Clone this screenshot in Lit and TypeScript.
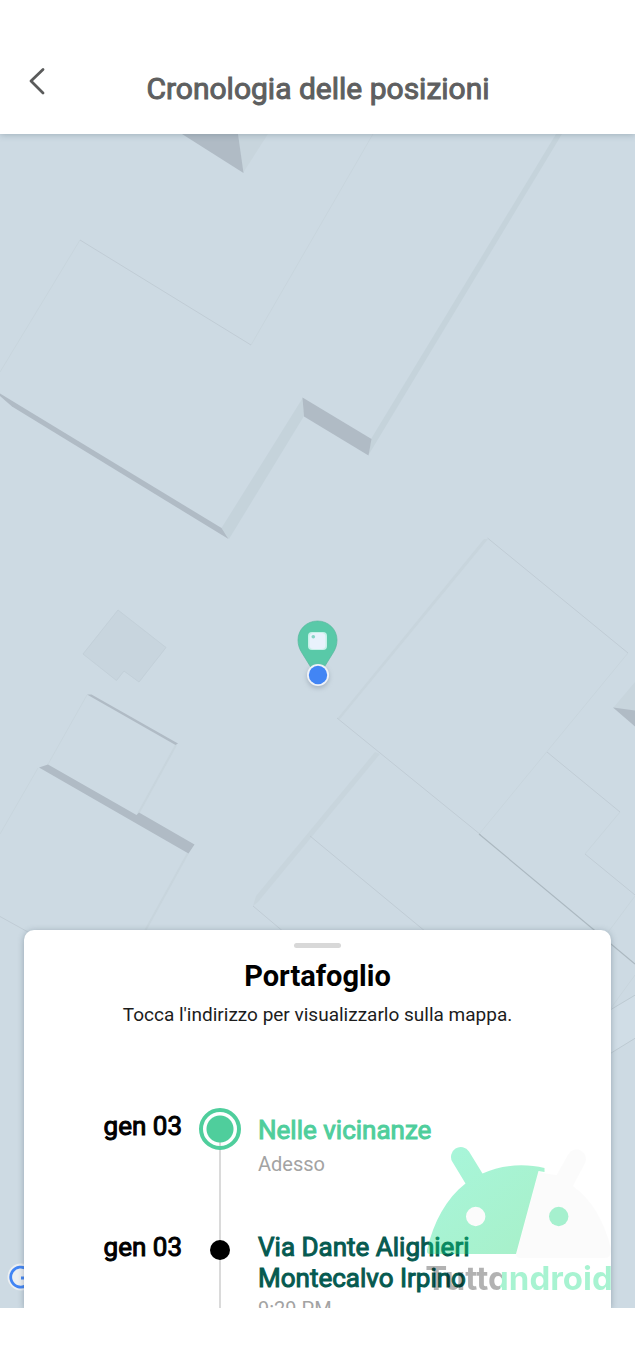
import { LitElement, html, svg, css } from "lit";
import { customElement } from "lit/decorators.js";
import { classMap } from "lit/directives/class-map.js";

interface Stop {
  date: string;
  address: string[];
  time: string;
  current: boolean;
}

const STOPS: Stop[] = [
  { date: "gen 03", address: ["Nelle vicinanze"], time: "Adesso", current: true },
  { date: "gen 03", address: ["Via Dante Alighieri", "Montecalvo Irpino"], time: "9:29 PM", current: false },
];

@customElement("position-map")
class PositionMap extends LitElement {
  static styles = css`
    :host { display: block; overflow: hidden; }
    .map { display: block; width: 100%; height: 100%; background: #cddae3; }
    .wall { fill: #b0bbc5; }
    .side { fill: #c5d3db; }
    .pale { fill: #c8d5dd; }
    .hut { fill: #c8d5de; stroke: #c3d0d9; }
    .edge { fill: none; stroke: #c0ccd5; stroke-width: 1; }
    .faint { fill: none; stroke: #c8d5dd; stroke-width: 1; }
    .wide { stroke-width: 2; }
    .deep { fill: none; stroke: #abb8c0; stroke-width: 1.2; }
    .road { fill: #d0dde6; stroke: #bdcad2; }
  `;

  render() {
    return html`
      <svg class="map" viewBox="0 134 635 1174" preserveAspectRatio="xMidYMin slice" role="img" aria-label="Mappa">
        <defs>
          <filter id="soft" x="-50%" y="-50%" width="200%" height="200%"><feGaussianBlur stdDeviation="2" /></filter>
          <filter id="glow" x="-50%" y="-50%" width="200%" height="200%"><feGaussianBlur stdDeviation="0.7" /></filter>
        </defs>
        ${svg`
          <path class="pale" d="M238 134H268L243 173Z" />
          <path class="wall" d="M182 134H238L243.500 173Z" />
          <path class="faint" d="M373 134L251 345M80 240L0 372" />
          <path class="edge" d="M80 240L251 345" />
          <path class="side" d="M556 134H562L368.500 455L371 439Z" />
          <path class="side" d="M303 397.500L304 416L229 539L221.500 528Z" />
          <path class="wall" d="M0 393.500L221.500 528L228.500 539L12 406.500L0 396Z" />
          <path class="wall" d="M302.500 397.500L371.500 439L368.500 455.500L304 416.500Z" />
          <path class="hut" d="M118 610L166 647.500L139 682L124 671L116.500 680.500L83 654Z" />
          <path class="faint" d="M87 695L47 766M38 768L0 834" />
          <path class="faint wide" d="M176 745L138 814M188 853L145 931" />
          <path class="wall" d="M87 694.500H91.500L178 743.500L175.500 745Z" />
          <path class="wall" d="M39 767.500L48 764.500L136.500 815L139 812.500L194.500 844.500L188.500 853.500Z" />
          <path class="edge" d="M0 916.500L28 932" />
          <path class="pale" d="M484 539H488L340 719H337Z" />
          <path class="edge" d="M487.500 538L628 653M337 718L481 835M547 752L620 812M585 854L635 895" />
          <path class="faint" d="M628 653L480 833M620 812L585 854M635 896L606 935M611 1008L635 975" />
          <path class="pale" d="M375 752L380 754L258 902L253 906L256 896Z" />
          <path class="edge" d="M310 836L426 932M253 906L285 933" />
          <path class="deep" d="M479 834L635 964" />
          <path class="pale" d="M613 708L635 682V711Z" />
          <path class="wall" d="M613 707.500L635 710.500V726.500Z" />
          <path class="road" d="M590 1022L642 991V1034L590 1066Z" />

          <path d="M317.500 621C306.500 621 298 629.500 298 640C298 645 299.500 649 302 653L317.500 678L333 653C335.500 649 337 645 337 640C337 629.500 328.500 621 317.500 621Z" fill="#59c9a8" stroke="#58b79e" stroke-width="0.700" />
          <rect x="308" y="632" width="19" height="18" rx="4" fill="#c7f1e9" filter="url(#glow)" />
          <rect x="309.500" y="633" width="16" height="16" rx="4" fill="#e9f2fc" />
          <circle cx="313.300" cy="636.700" r="1.800" fill="#86d5c6" />
          <circle cx="318" cy="677" r="11.500" fill="#8b98a8" opacity="0.500" filter="url(#soft)" />
          <circle cx="318" cy="675" r="11" fill="#eff2f8" />
          <circle cx="318" cy="675" r="9.200" fill="#4285f4" />
        `}
      </svg>
    `;
  }
}

@customElement("brand-watermark")
class BrandWatermark extends LitElement {
  static styles = css`
    :host { display: flex; flex-direction: column; align-items: center; pointer-events: none; }
    .robot { display: block; width: 188px; height: 112px; }
    .name {
      font: 700 33px/40px Inter, "Open Sans", sans-serif;
      font-feature-settings: "cv11";
      color: transparent;
      background: linear-gradient(100deg, rgba(0, 0, 0, 0.3) 41%, rgba(13, 222, 128, 0.36) 41%);
      -webkit-background-clip: text;
      background-clip: text;
    }
  `;

  render() {
    return html`
      <svg class="robot" viewBox="425 1146 188 112" aria-hidden="true">
        <defs>
          <linearGradient id="mint" x1="0" y1="0" x2="1" y2="1">
            <stop offset="0" stop-color="#0de69c" />
            <stop offset="1" stop-color="#0dd568" />
          </linearGradient>
        </defs>
        <path fill="#000" fill-opacity="0.016" d="M538.500 1171.500L543 1173L556.500 1175L568 1154.500A9.500 9.500 0 0 1 585 1163.500L573 1186Q600 1205 611 1248Q612 1258 605 1258H519Q515 1257 516.500 1253Z" />
        <path fill="url(#mint)" fill-opacity="0.360" fill-rule="evenodd" d="M427 1250C434 1221 446 1199 465.500 1183.500L452.500 1162A9.600 9.600 0 0 1 469 1151.500L482.500 1173.500C500 1165 524 1163 544.500 1168V1172L538.500 1171L516 1254H429.500Q426.500 1254 427 1250ZM466 1216.500A9.700 9.700 0 1 0 485.400 1216.500A9.700 9.700 0 1 0 466 1216.500Z" />
        <circle cx="475.700" cy="1216.500" r="9.700" fill="#000" fill-opacity="0.016" />
        <circle cx="558.700" cy="1216.500" r="9.700" fill="#0dde80" fill-opacity="0.360" />
      </svg>
      <div class="name">Tuttandroid</div>
    `;
  }
}

@customElement("app-root")
class AppRoot extends LitElement {
  static styles = css`
    :host {
      display: flex;
      flex-direction: column;
      min-height: 100vh;
      background: #fff;
      color: #000;
      font-family: Roboto, "Noto Sans", sans-serif;
    }
    * { box-sizing: border-box; }
    .bar {
      display: grid;
      grid-template-columns: 76px 1fr 75px;
      align-items: center;
      height: 134px;
      padding-top: 44px;
      box-shadow: 0 0 7px rgba(70, 90, 105, 0.4);
      z-index: 1;
    }
    .back {
      justify-self: start;
      margin: 0 0 16px 19px;
      padding: 8px;
      border: 0;
      background: none;
      color: #5a5b5b;
    }
    .chevron { display: block; width: 20px; height: 30px; }
    .heading {
      margin: 0;
      text-align: center;
      font-size: 30px;
      line-height: 36px;
      font-weight: 400;
      -webkit-text-stroke: 1px #5e5f60;
      color: #5e5f60;
    }
    .stage {
      position: relative;
      display: grid;
      flex: 1;
      margin-bottom: 37px;
      overflow: hidden;
    }
    .canvas, .sheet { grid-area: 1 / 1; }
    .canvas { height: 0; min-height: 100%; }
    .google {
      position: absolute;
      left: 6px;
      bottom: 16px;
      width: 30px;
      height: 30px;
    }
    .sheet {
      position: relative;
      align-self: end;
      height: 378px;
      margin: 0 24px;
      border-radius: 10px 10px 0 0;
      background: #fff;
      box-shadow: 0 1px 6px rgba(70, 90, 105, 0.4);
    }
    .content {
      height: 100%;
      padding-top: 13px;
      overflow: hidden;
    }
    .grip {
      width: 47px;
      height: 5px;
      margin: 0 auto;
      border-radius: 3px;
      background: #d8d8d8;
    }
    .name {
      margin: 10px 0 0;
      text-align: center;
      font-size: 29px;
      line-height: 36px;
      font-weight: 700;
    }
    .hint {
      margin: 9px 0 0;
      text-align: center;
      font-size: 19px;
      line-height: 24px;
      color: #1c1c1c;
    }
    .stops { list-style: none; margin: 84px 0 0; padding: 0; }
    .stop {
      position: relative;
      display: grid;
      grid-template-columns: 158px 76px 1fr;
      min-height: 121px;
      line-height: 31px;
    }
    .stop::before {
      content: "";
      position: absolute;
      left: 195px;
      top: 16px;
      bottom: -16px;
      width: 2px;
      background: #dadada;
    }
    .date {
      text-align: right;
      font-size: 26px;
      -webkit-text-stroke: 1px #000;
    }
    .marker {
      position: relative;
      justify-self: center;
      width: 20px;
      height: 20px;
      margin-top: 8px;
      border-radius: 50%;
      background: #000;
    }
    .current .marker {
      width: 42px;
      height: 42px;
      margin-top: -3px;
      border: 4px solid #4fce9c;
      background: radial-gradient(circle, #4fce9c 13px, transparent 14px);
    }
    .current .place { padding-top: 4px; }
    .address {
      display: block;
      font-size: 26px;
      -webkit-text-stroke: 1px currentColor;
      color: #065a50;
      text-decoration: none;
    }
    .current .address { color: #4fce9c; }
    .line { display: block; }
    .time { display: block; font-size: 20px; color: #a3a3a3; }
    .current .time { padding-top: 3px; }
    .mark { position: absolute; right: 22px; bottom: 10px; }
  `;

  private renderStop(stop: Stop) {
    return html`
      <li class=${classMap({ stop: true, current: stop.current })}>
        <span class="date">${stop.date}</span>
        <span class="marker"></span>
        <div class="place">
          <a class="address" href="#mappa">${stop.address.map((l) => html`<span class="line">${l}</span>`)}</a>
          <span class="time">${stop.time}</span>
        </div>
      </li>
    `;
  }

  render() {
    return html`
      <header class="bar">
        <button class="back" aria-label="Indietro">
          <svg class="chevron" viewBox="0 0 20 30" fill="none" stroke="currentColor" stroke-width="2.800" stroke-linecap="round" stroke-linejoin="round">
            <path d="M16 3.500L4 15L16 27" />
          </svg>
        </button>
        <h1 class="heading">Cronologia delle posizioni</h1>
      </header>
      <main class="stage" id="mappa">
        <position-map class="canvas"></position-map>
        <svg class="google" viewBox="6 1262 30 30" role="img" aria-label="Google">
          <circle cx="21" cy="1277" r="13.500" fill="#eceff2" />
          <path d="M27.800 1270A10 10 0 1 0 30.700 1278H21" fill="none" stroke="#4285f4" stroke-width="2.800" />
        </svg>
        <section class="sheet">
          <div class="content">
            <div class="grip"></div>
            <h2 class="name">Portafoglio</h2>
            <p class="hint">Tocca l'indirizzo per visualizzarlo sulla mappa.</p>
            <ol class="stops">${STOPS.map((s) => this.renderStop(s))}</ol>
          </div>
        </section>
        <brand-watermark class="mark"></brand-watermark>
      </main>
    `;
  }
}
